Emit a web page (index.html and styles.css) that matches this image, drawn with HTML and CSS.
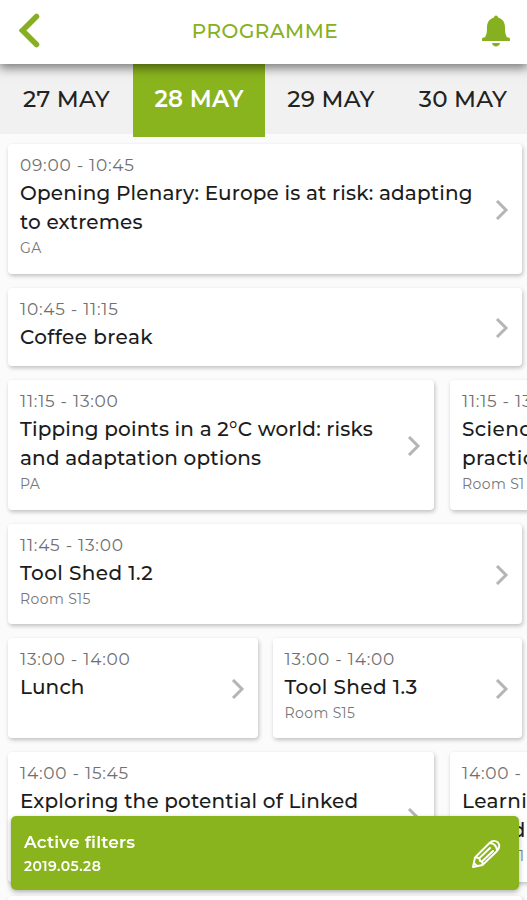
FILE: index.html
```html
<!DOCTYPE html>
<html lang="en">
<head>
<meta charset="utf-8">
<meta name="viewport" content="width=device-width, initial-scale=1">
<title>Programme</title>
<link rel="stylesheet" href="styles.css">
</head>
<body>
<svg class="defs" width="0" height="0" aria-hidden="true">
  <symbol id="chevron" viewBox="0 0 14 20"><path d="M2 1 11 10 2 19" fill="none" stroke="currentColor" stroke-width="3"/></symbol>
</svg>
<div class="app">
  <header class="header">
    <svg class="back" viewBox="0 0 22 36"><path d="M17.500 3.500 3.500 17.500 17.500 31.500" fill="none" stroke="currentColor" stroke-width="5.500" stroke-linecap="round" stroke-linejoin="miter"/></svg>
    <h1 class="heading">PROGRAMME</h1>
    <svg class="bell" viewBox="0 0 28 32"><path d="M12 2.500a2 2 0 0 1 4 0C21.500 4 23 8.500 23 12.500c0 6 1 8.500 2.500 10h1a1.500 1.500 0 0 1 1.500 1.500v2H0v-2a1.500 1.500 0 0 1 1.500-1.500h1C4 21 5 18.500 5 12.500 5 8.500 6.500 4 12 2.500zM10 28h8c-.5 4.500-7.500 4.500-8 0z" fill="currentColor"/></svg>
  </header>
  <nav class="days">
    <a class="day">27 MAY</a>
    <a class="day day-active">28 MAY</a>
    <a class="day">29 MAY</a>
    <a class="day">30 MAY</a>
  </nav>
  <main class="schedule">
    <div class="row">
      <article class="card">
        <div class="info"><p class="time">09:00 - 10:45</p><h2 class="title title-long">Opening Plenary: Europe is at risk: adapting<br>to extremes</h2><p class="room">GA</p></div>
        <svg class="chevron"><use href="#chevron"/></svg>
      </article>
    </div>
    <div class="row">
      <article class="card">
        <div class="info"><p class="time">10:45 - 11:15</p><h2 class="title">Coffee break</h2></div>
        <svg class="chevron"><use href="#chevron"/></svg>
      </article>
    </div>
    <div class="row row-scroll">
      <article class="card">
        <div class="info"><p class="time">11:15 - 13:00</p><h2 class="title title-long">Tipping points in a 2°C world: risks<br>and adaptation options</h2><p class="room">PA</p></div>
        <svg class="chevron"><use href="#chevron"/></svg>
      </article>
      <article class="card">
        <div class="info"><p class="time">11:15 - 13:00</p><h2 class="title">Science<br>practice</h2><p class="room">Room S1</p></div>
      </article>
    </div>
    <div class="row">
      <article class="card">
        <div class="info"><p class="time">11:45 - 13:00</p><h2 class="title">Tool Shed 1.2</h2><p class="room">Room S15</p></div>
        <svg class="chevron"><use href="#chevron"/></svg>
      </article>
    </div>
    <div class="row">
      <article class="card">
        <div class="info"><p class="time">13:00 - 14:00</p><h2 class="title title-long">Lunch</h2></div>
        <svg class="chevron"><use href="#chevron"/></svg>
      </article>
      <article class="card">
        <div class="info"><p class="time">13:00 - 14:00</p><h2 class="title">Tool Shed 1.3</h2><p class="room">Room S15</p></div>
        <svg class="chevron"><use href="#chevron"/></svg>
      </article>
    </div>
    <div class="row row-scroll">
      <article class="card">
        <div class="info"><p class="time">14:00 - 15:45</p><h2 class="title title-long">Exploring the potential of Linked</h2></div>
        <svg class="chevron"><use href="#chevron"/></svg>
      </article>
      <article class="card">
        <div class="info"><p class="time">14:00 - 15:45</p><h2 class="title">Learning<br>cost d</h2><p class="room">Room S1</p></div>
      </article>
    </div>
    <div class="row"><article class="card"></article></div>
  </main>
  <aside class="filters">
    <div><p class="filters-label">Active filters</p><p class="filters-value">2019.05.28</p></div>
    <svg class="pencil" viewBox="0 0 30 30" fill="none" stroke="currentColor" stroke-width="1.900" stroke-linejoin="round" stroke-linecap="round"><path d="M2 28 4 18.500 18.500 4Q22.500 0 27 3.500 30 7.500 26 12L11.500 26 2 28M4 18.500Q9 18 9 22 12 22 11.500 26M3 24 6 27M19 4Q25 4.500 26 11M9 18.500 19 9M12 21.500 22 12"/></svg>
  </aside>
</div>
</body>
</html>
```
FILE: styles.css
```css
* { box-sizing: border-box; }
body, h1, h2, p { margin: 0; }
body { background: #fbfbfb; font-family: Montserrat, Inter, sans-serif; }
.defs { position: absolute; }
.app { height: 900px; overflow: hidden; }
.header {
  position: relative;
  z-index: 2;
  height: 64px;
  padding: 0 17px 2px 19px;
  display: flex;
  align-items: center;
  justify-content: space-between;
  background: #fff;
  color: #86b01f;
  box-shadow: 0 3px 10px 1px rgba(0, 0, 0, .5);
}
.back { width: 22px; height: 36px; }
.heading { font-size: 20px; font-weight: 500; letter-spacing: .5px; padding-left: 7px; }
.bell { width: 28px; height: 32px; }
.days { display: grid; grid-template-columns: 133px 132px 132px 130px; height: 70px; background: #f1f1f1; }
.day { display: flex; justify-content: center; height: 70px; line-height: 70px; font-size: 23px; font-weight: 500; letter-spacing: .2px; color: #222; white-space: nowrap; }
.day:last-child { padding-left: 2px; }
.day-active { height: 73px; background: #8ab41e; color: #fff; font-weight: 600; }
.schedule { display: flex; flex-direction: column; gap: 14px; padding: 10px 5px 0 8px; }
.row { display: grid; grid-auto-flow: column; grid-auto-columns: minmax(0, 1fr); gap: 15px; }
.row-scroll { grid-template-columns: 426px 426px; gap: 16px; }
.card {
  min-height: 78px;
  padding: 10px 13px 14px 12px;
  display: flex;
  align-items: center;
  justify-content: space-between;
  background: #fff;
  border-radius: 4px;
  box-shadow: 1px 2px 4px rgba(0, 0, 0, .24);
}
.row-scroll .card { height: 130px; }
.row:first-child .card { height: 130px; }
.info { align-self: flex-start; white-space: nowrap; }
.time { font-size: 17px; line-height: 22px; color: #707070; letter-spacing: .75px; }
.title { margin-top: 3px; font-size: 20px; line-height: 29px; font-weight: 500; color: #1c1c1c; letter-spacing: .4px; }
.title-long { letter-spacing: .16px; }
.room { font-size: 14px; line-height: 22px; color: #777; letter-spacing: .4px; }
.chevron { flex: none; width: 14px; height: 20px; color: #b5b5b5; margin: 5px 0 0 -14px; }
.filters {
  position: fixed;
  left: 11px;
  top: 816px;
  z-index: 3;
  width: 508px;
  height: 74px;
  padding: 2px 18px 0 13px;
  display: flex;
  align-items: center;
  justify-content: space-between;
  background: #8ab41e;
  color: #fff;
  border-radius: 5px;
  box-shadow: 0 2px 5px rgba(0, 0, 0, .3);
}
.filters-label { font-size: 17px; line-height: 24px; font-weight: 600; letter-spacing: .15px; }
.filters-value { font-size: 14px; line-height: 24px; font-weight: 600; letter-spacing: .4px; }
.pencil { width: 30px; height: 30px; }
```
